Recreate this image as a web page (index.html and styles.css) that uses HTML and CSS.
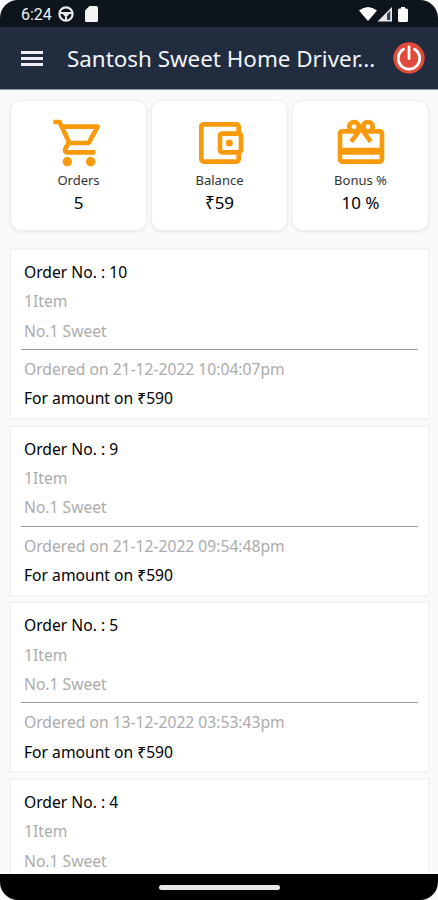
FILE: index.html
```html
<!DOCTYPE HTML>
<html lang="en">
<head>
<meta charset="utf-8">
<title>Santosh Sweet Home Driver</title>
<link rel="stylesheet" href="styles.css">
</head>
<body>
<div class="screen">

<div class="status_bar">
<span class="clock">6:24</span>
<svg class="wheel" viewBox="0 0 16 16" width="16" height="16"><circle cx="8" cy="8" r="6.600" fill="none" stroke="#e8eaec" stroke-width="2.200"/><path d="M2 7h12M8 8v6M5 7l3 3 3-3" fill="none" stroke="#e8eaec" stroke-width="2"/></svg>
<svg class="sdcard" viewBox="0 0 13 16" width="13" height="16"><path d="M4.500 0H11.500Q13 0 13 1.500V14.500Q13 16 11.500 16H1.500Q0 16 0 14.500V4.500z" fill="#f4f4f4"/></svg>
<svg class="signals" viewBox="0 0 52 18" width="52" height="18">
<path d="M0 5.500Q9 -1.500 18 5.500L9 16z" fill="#fff"/>
<path d="M18.500 16.500L33 2v14.500z" fill="#e6e8ea"/><path d="M28 9l3.300-3.300V15H28z" fill="#38404a"/>
<path d="M42 2h4v1.500h1.500q1.500 0 1.500 1.500v10.500q0 1.500-1.500 1.500h-7q-1.500 0-1.500-1.500V5q0-1.500 1.500-1.500H42z" fill="#fff"/>
</svg>
</div>

<div class="toolbar">
<div class="menu"><i></i><i></i><i></i></div>
<div class="title">Santosh Sweet Home Driver...</div>
<svg class="power" viewBox="0 0 32 32" width="32" height="32"><circle cx="16" cy="16" r="15.700" fill="#e04b3c"/><path d="M10.500 7.200A10.700 10.700 0 1 0 21.500 7.200M16 5v11.500" fill="none" stroke="#fff" stroke-width="2.800" stroke-linecap="round"/></svg>
</div>

<div class="content">
<div class="stats">
<div class="stat">
<svg viewBox="0 0 24 24" width="56" height="56"><path d="M15.550 13c.75 0 1.410-.41 1.750-1.030l3.580-6.490c.37-.66-.11-1.480-.87-1.480H5.210l-.94-2H1v2h2l3.600 7.590-1.350 2.440C4.520 15.370 5.480 17 7 17h12v-2H7l1.100-2h7.450zM6.160 6h12.150l-2.760 5H8.530L6.160 6zM7 18c-1.100 0-1.990.9-1.990 2S5.900 22 7 22s2-.9 2-2-.9-2-2-2zm10 0c-1.100 0-1.990.9-1.990 2s.89 2 1.990 2 2-.9 2-2-.9-2-2-2z"/></svg>
<span class="label">Orders</span>
<span class="value">5</span>
</div>
<div class="stat">
<svg viewBox="0 0 24 24" width="56" height="56"><path d="M21 7.280V5c0-1.100-.9-2-2-2H5c-1.110 0-2 .9-2 2v14c0 1.100.89 2 2 2h14c1.100 0 2-.9 2-2v-2.280c.59-.35 1-.98 1-1.720V9c0-.74-.41-1.370-1-1.720zM20 9v6h-7V9h7zM5 19V5h14v2h-6c-1.100 0-2 .9-2 2v6c0 1.100.9 2 2 2h6v2H5z"/><circle cx="16" cy="12" r="1.500"/></svg>
<span class="label">Balance</span>
<span class="value">₹59</span>
</div>
<div class="stat">
<svg viewBox="0 0 24 24" width="56" height="56"><path d="M20 6h-2.180c.11-.31.18-.65.18-1 0-1.660-1.340-3-3-3-1.050 0-1.960.54-2.500 1.350l-.5.67-.5-.68C10.960 2.540 10.050 2 9 2 7.340 2 6 3.340 6 5c0 .35.07.69.18 1H4c-1.110 0-1.990.89-1.990 2L2 19c0 1.110.89 2 2 2h16c1.110 0 2-.89 2-2V8c0-1.110-.89-2-2-2zm-5-2c.55 0 1 .45 1 1s-.45 1-1 1-1-.45-1-1 .45-1 1-1zM9 4c.55 0 1 .45 1 1s-.45 1-1 1-1-.45-1-1 .45-1 1-1zm11 15H4v-2h16v2zm0-5H4V8h5.080L7 10.830 8.620 12 12 7.400l3.380 4.600L17 10.830 14.920 8H20v6z"/></svg>
<span class="label">Bonus %</span>
<span class="value">10 %</span>
</div>
</div>

<div class="orders">
<div class="order">
<p class="dark">Order No. : 10</p>
<p>1Item</p>
<p>No.1 Sweet</p>
<hr>
<p>Ordered on 21-12-2022 10:04:07pm</p>
<p class="dark">For amount on ₹590</p>
</div>
<div class="order">
<p class="dark">Order No. : 9</p>
<p>1Item</p>
<p>No.1 Sweet</p>
<hr>
<p>Ordered on 21-12-2022 09:54:48pm</p>
<p class="dark">For amount on ₹590</p>
</div>
<div class="order">
<p class="dark">Order No. : 5</p>
<p>1Item</p>
<p>No.1 Sweet</p>
<hr>
<p>Ordered on 13-12-2022 03:53:43pm</p>
<p class="dark">For amount on ₹590</p>
</div>
<div class="order">
<p class="dark">Order No. : 4</p>
<p>1Item</p>
<p>No.1 Sweet</p>
</div>
</div>
</div>

<div class="nav_bar"><div class="pill"></div></div>
</div>
</body>
</html>
```
FILE: styles.css
```css
* {
	box-sizing:border-box;
}
body {
	margin:0;
	background-color:#fafafa;
	font-family:"Noto Sans",sans-serif;
}
.screen {
	width:438px;
	height:900px;
	display:flex;
	flex-direction:column;
	overflow:hidden;
	border-radius:18px;
}
.status_bar {
	height:27px;
	flex:none;
	display:flex;
	align-items:center;
	padding:1px 27px 0 21px;
	background-color:#0d141c;
}
.clock {
	width:31px;
	color:#eef0f2;
	font-family:Roboto,sans-serif;
	font-size:16px;
	white-space:nowrap;
}
.wheel {
	margin-left:6px;
}
.sdcard {
	margin-left:11px;
}
.signals {
	margin-left:auto;
}
.toolbar {
	height:63px;
	flex:none;
	display:flex;
	align-items:center;
	padding:0 13px 0 21px;
	background-color:#212d3f;
	border-bottom:1px solid #929bab;
}
.menu {
	width:22px;
	display:flex;
	flex-direction:column;
	gap:3px;
}
.menu i {
	height:3px;
	background-color:#f0eef2;
}
.title {
	margin-left:24px;
	padding-top:1px;
	color:#f1f4f8;
	font-size:22.400px;
	line-height:32px;
	white-space:nowrap;
}
.power {
	margin-left:auto;
}
.content {
	flex:1;
	min-height:0;
	overflow:hidden;
	padding:10px 8px 0 10px;
}
.stats {
	display:flex;
	gap:4px;
	margin-right:1px;
}
.stat {
	flex:1;
	height:131px;
	display:flex;
	flex-direction:column;
	align-items:center;
	padding-top:14px;
	background-color:#fff;
	border:1px solid #f0f0f0;
	border-radius:11px;
	box-shadow:0 1px 3px #e6e6e6;
}
.stat svg {
	fill:#f99a0c;
}
.label {
	color:#333;
	font-size:13px;
	line-height:19px;
}
.value {
	color:#000;
	font-size:17px;
	line-height:26px;
}
.orders {
	display:flex;
	flex-direction:column;
	gap:4.700px;
	margin:17px 0 0 -1px;
}
.order {
	height:172px;
	flex:none;
	padding:8px 10px 0;
	background-color:#fff;
	border:2px solid #f4f4f4;
}
.order p {
	margin:0;
	padding-left:3px;
	color:#acacac;
	font-size:15.650px;
	line-height:29.300px;
}
.order .dark {
	color:#000;
}
.order hr {
	height:0;
	margin:3px 0 5px;
	border:none;
	border-top:1px solid #999;
}
.nav_bar {
	height:26px;
	flex:none;
	display:flex;
	justify-content:center;
	padding-top:11px;
	background-color:#000;
}
.pill {
	width:121px;
	height:5px;
	border-radius:3px;
	background-color:#e8e8e8;
}
```
